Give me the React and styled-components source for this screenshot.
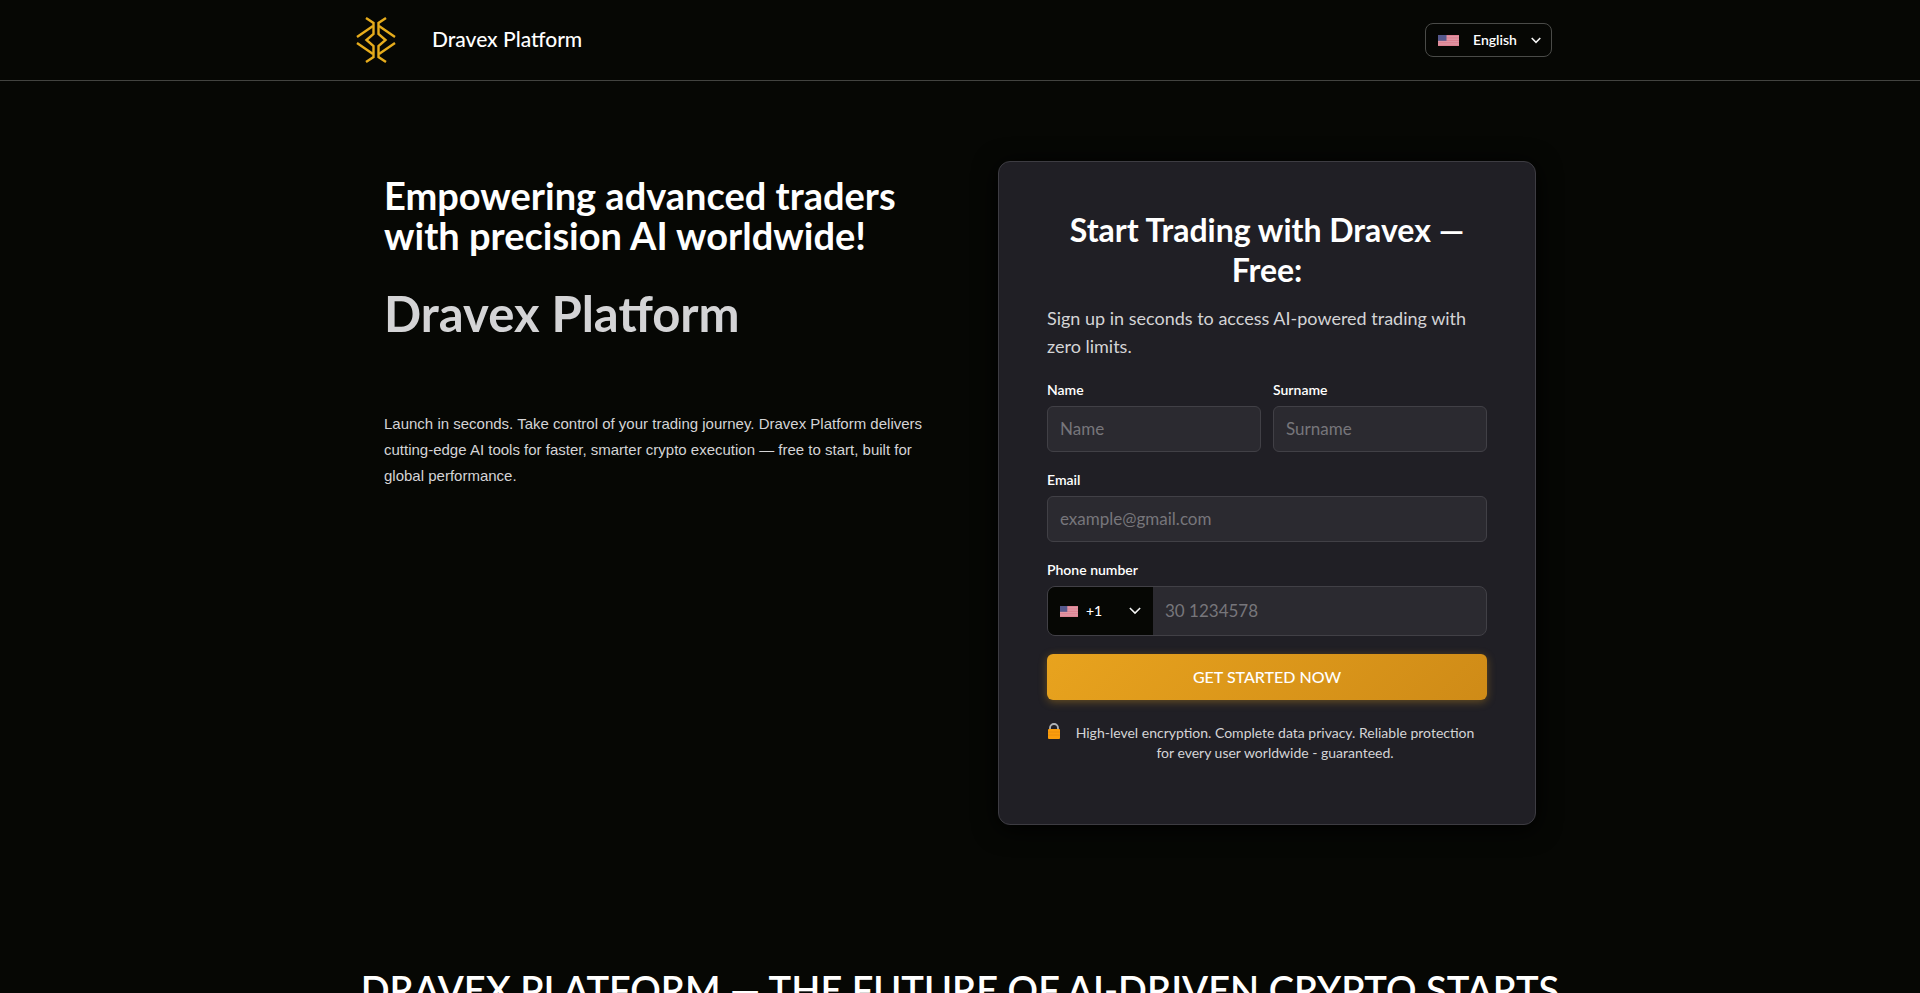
import React from 'react'
import styled, { createGlobalStyle } from 'styled-components'

const App = () => {
    return (
        <>
            <GlobalStyle />
            <Header>
                <HeaderInner>
                    <Brand href="#home">
                        <BrandLogo />
                        <BrandName>Dravex Platform</BrandName>
                    </Brand>
                    <LanguagePicker>
                        <Flag width="21" height="11" />
                        <LanguageSelect aria-label="Language" defaultValue="en">
                            <option value="en">English</option>
                        </LanguageSelect>
                        <Chevron size={10} weight={2.2} />
                    </LanguagePicker>
                </HeaderInner>
            </Header>
            <main>
                <Hero id="home">
                    <Intro>
                        <Tagline>Empowering advanced traders with precision AI worldwide!</Tagline>
                        <Title>Dravex Platform</Title>
                        <Lead>
                            Launch in seconds. Take control of your trading journey. Dravex Platform delivers
                            cutting-edge AI tools for faster, smarter crypto execution — free to start, built for
                            global performance.
                        </Lead>
                    </Intro>
                    <SignUpForm />
                </Hero>
                <FutureSection>
                    <FutureTitle>Dravex Platform — The Future of AI-Driven Crypto Starts</FutureTitle>
                </FutureSection>
            </main>
        </>
    )
}

const SignUpForm = () => {
    const handleSubmit = e => {
        e.preventDefault()
    }

    return (
        <Card onSubmit={handleSubmit}>
            <CardTitle>Start Trading with Dravex — Free:</CardTitle>
            <CardText>Sign up in seconds to access AI-powered trading with zero limits.</CardText>
            <Fields>
                <Row>
                    <Field>
                        <Label htmlFor="name">Name</Label>
                        <Input id="name" type="text" placeholder="Name" />
                    </Field>
                    <Field>
                        <Label htmlFor="surname">Surname</Label>
                        <Input id="surname" type="text" placeholder="Surname" />
                    </Field>
                </Row>
                <Field>
                    <Label htmlFor="email">Email</Label>
                    <Input id="email" type="email" placeholder="example@gmail.com" />
                </Field>
                <Field>
                    <Label htmlFor="phone">Phone number</Label>
                    <PhoneBox>
                        <PrefixPicker>
                            <Flag width="18" height="11" />
                            <PrefixSelect aria-label="Country code" defaultValue="+1">
                                <option value="+1">+1</option>
                            </PrefixSelect>
                            <Chevron size={12} weight={1.8} />
                        </PrefixPicker>
                        <PhoneInput id="phone" type="tel" placeholder="30 1234578" />
                    </PhoneBox>
                </Field>
            </Fields>
            <SubmitButton type="submit">Get started now</SubmitButton>
            <Privacy>
                <Lock />
                <p>
                    High-level encryption. Complete data privacy. Reliable protection for every user
                    worldwide - guaranteed.
                </p>
            </Privacy>
        </Card>
    )
}

const BrandLogo = () => (
    <svg width="40" height="46" viewBox="0 0 40 46" fill="none" stroke="#e6ac1c" strokeWidth="2.4" aria-hidden="true">
        <path d="M10 1 L17.5 6 V17 L10.5 23 L17.5 29 V40 L10 45" />
        <path d="M30 1 L22.5 6 V17 L29.5 23 L22.5 29 V40 L30 45" />
        <path d="M17 9 L1 20 M1 26 L17 37" />
        <path d="M23 9 L39 20 M39 26 L23 37" />
    </svg>
)

const Flag = ({ width, height }) => (
    <svg width={width} height={height} viewBox="0 0 21 11" preserveAspectRatio="none" aria-hidden="true">
        <rect width="21" height="11" fill="#e3a3ae" />
        <path d="M0 .5H21M0 2.2H21M0 3.9H21M0 5.6H21M0 7.3H21M0 9H21M0 10.6H21" stroke="#d97487" strokeWidth=".8" />
        <rect width="8.5" height="5.8" fill="#55588c" />
    </svg>
)

const Chevron = ({ size, weight }) => (
    <svg width={size} height={size / 2 + 2} viewBox="0 0 14 9" fill="none" stroke="#f5f5f5" strokeWidth={weight} aria-hidden="true">
        <path d="M1 1 L7 7 L13 1" />
    </svg>
)

const Lock = () => (
    <svg width="14" height="16" viewBox="0 0 14 16" aria-hidden="true">
        <path d="M3 7V5a4 4 0 0 1 8 0v2" fill="none" stroke="#b0b3b6" strokeWidth="1.8" />
        <rect x="1" y="6" width="12" height="10" rx="1" fill="#fb9d0c" />
        <path d="M1 9h12M1 12h12" stroke="#e98a0e" strokeWidth=".8" />
    </svg>
)

const GlobalStyle = createGlobalStyle`
    * {
        box-sizing: border-box;
    }

    body {
        margin: 0;
        background: #060704;
        color: white;
        font-family: Lato, 'Noto Sans', sans-serif;
    }

    h1, h2, h3, p {
        margin: 0;
    }

    input, select, button {
        font-family: inherit;
    }

    svg {
        flex-shrink: 0;
    }
`

const Header = styled.header`
    border-bottom: 1px solid #424340;
`

const HeaderInner = styled.div`
    max-width: 1208px;
    height: 80px;
    margin: 0 auto;
    padding-right: 12px;
    display: flex;
    align-items: center;
    justify-content: space-between;
`

const Brand = styled.a`
    display: flex;
    align-items: center;
    gap: 36px;
    color: white;
    text-decoration: none;
`

const BrandName = styled.span`
    padding-bottom: 4px;
    font-size: 21px;
    font-weight: 500;
`

const LanguagePicker = styled.div`
    width: 127px;
    height: 34px;
    padding: 0 10px 0 12px;
    display: flex;
    align-items: center;
    gap: 6px;
    border: 1px solid #4a4b48;
    border-radius: 8px;
`

const LanguageSelect = styled.select`
    flex: 1;
    min-width: 0;
    padding: 0 0 2px 8px;
    appearance: none;
    border: 0;
    background: transparent;
    color: white;
    font-size: 14px;
    font-weight: 600;
`

const Hero = styled.section`
    max-width: 1200px;
    margin: 0 auto;
    padding: 80px 24px 140px;
    display: grid;
    grid-template-columns: 1fr 538px;
    align-items: start;
    gap: 60px;
`

const Intro = styled.div`
    padding-top: 14px;
`

const Tagline = styled.h2`
    font-size: 38px;
    line-height: 40px;
    font-weight: 700;
`

const Title = styled.h1`
    margin-top: 28px;
    color: #d4d4d6;
    font-size: 49px;
    line-height: 60px;
    font-weight: 700;
`

const Lead = styled.p`
    margin-top: 68px;
    color: #d4d4d6;
    font-family: 'Liberation Sans', sans-serif;
    font-size: 15px;
    line-height: 26px;
`

const Card = styled.form`
    min-height: 664px;
    padding: 48px;
    border: 1px solid #3d3c42;
    border-radius: 12px;
    background: #201f25;
    box-shadow: 0 4px 24px black;
`

const CardTitle = styled.h2`
    font-size: 32px;
    line-height: 40px;
    font-weight: 700;
    text-align: center;
`

const CardText = styled.p`
    margin: 14px 0 20px;
    color: #d4d4d6;
    font-size: 18px;
    line-height: 28px;
`

const Fields = styled.div`
    display: grid;
    gap: 18px;
`

const Row = styled.div`
    display: grid;
    grid-template-columns: 1fr 1fr;
    gap: 12px;
`

const Field = styled.div`
    display: flex;
    flex-direction: column;
    gap: 6px;
`

const Label = styled.label`
    font-size: 14px;
    line-height: 20px;
    font-weight: 600;
`

const Input = styled.input`
    width: 100%;
    height: 46px;
    padding: 0 12px 2px;
    border: 1px solid #414046;
    border-radius: 6px;
    background: #2b2a30;
    color: white;
    font-size: 17px;

    &::placeholder{
        color: #77767b;
    }
`

const PhoneBox = styled.div`
    height: 50px;
    display: flex;
    border: 1px solid #414046;
    border-radius: 8px;
    background: #2b2a30;
    overflow: hidden;
`

const PrefixPicker = styled.div`
    width: 105px;
    padding: 0 12px;
    display: flex;
    align-items: center;
    gap: 8px;
    background: #060704;
`

const PrefixSelect = styled(LanguageSelect)`
    padding: 0 0 2px;
    font-weight: 500;
`

const PhoneInput = styled(Input)`
    flex: 1;
    height: auto;
    border: 0;
    border-radius: 0;
    background: transparent;
`

const SubmitButton = styled.button`
    width: 100%;
    height: 46px;
    margin: 18px 0 23px;
    padding: 0 12px 2px;
    border: 0;
    border-radius: 6px;
    background: linear-gradient(135deg, #e8a31e, #cf8b17);
    box-shadow: 0 2px 8px rgba(232, 163, 30, .35);
    color: white;
    font-size: 16px;
    font-weight: 500;
    text-transform: uppercase;
    cursor: pointer;
`

const Privacy = styled.div`
    padding-right: 4px;
    display: flex;
    align-items: flex-start;
    gap: 6px;
    color: #d4d4d6;
    font-size: 14px;
    line-height: 20px;
    text-align: center;
`

const FutureSection = styled.section`
    max-width: 1200px;
    margin: 0 auto;
`

const FutureTitle = styled.h2`
    font-size: 38px;
    line-height: 48px;
    font-weight: 600;
    text-align: center;
    text-transform: uppercase;
`

export default App
